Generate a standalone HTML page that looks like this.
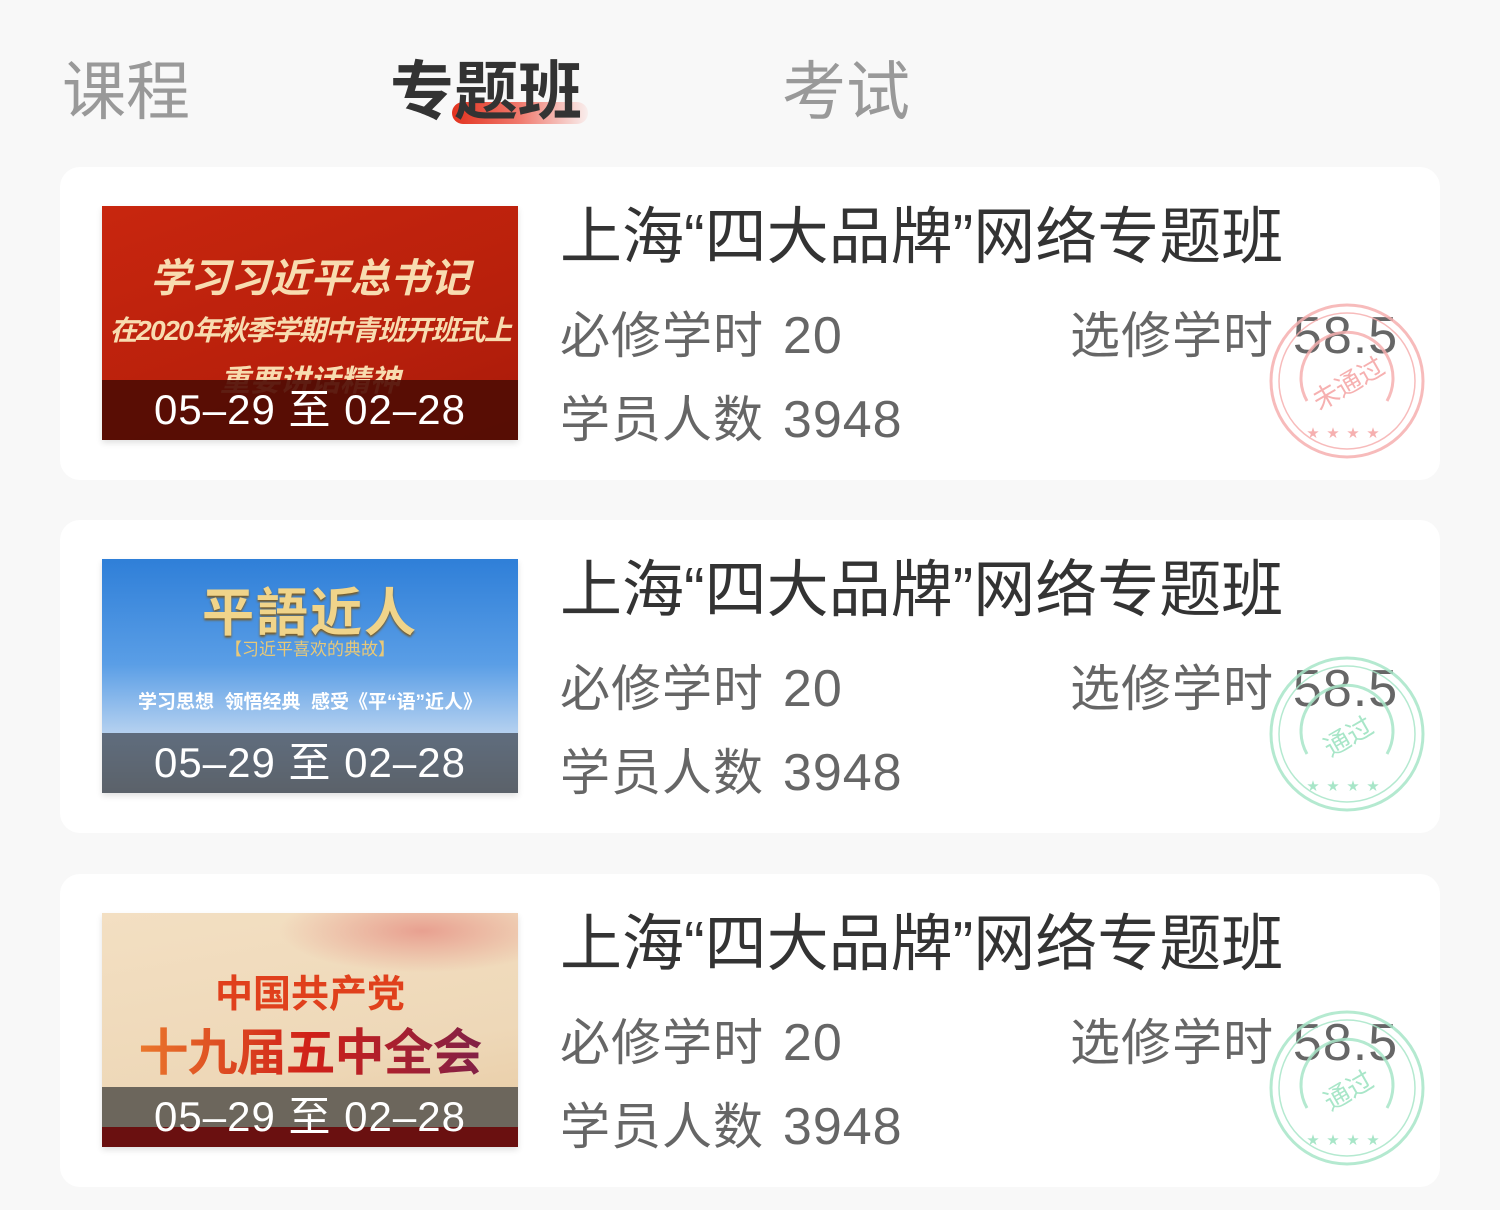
<!DOCTYPE html>
<html><head><meta charset="utf-8"><style>
body{margin:0;width:1500px;height:1210px;background:#f8f8f8;font-family:"Liberation Sans","Noto Sans CJK SC",sans-serif;position:relative;overflow:hidden}
.tab{position:absolute;top:54px;font-size:64px;line-height:76px;color:#999}
.card{position:absolute;left:60px;width:1380px;height:313px;background:#fff;border-radius:20px}
.img{position:absolute;left:42px;top:39px;width:416px;height:234px;overflow:hidden;box-shadow:0 3px 6px rgba(0,0,0,.12)}
.date{position:absolute;left:0;right:0;bottom:0;height:60px;color:#fff;font-size:42px;line-height:60px;text-align:center;letter-spacing:1px}
.t{position:absolute;left:500px;top:40px;font-size:62px;line-height:62px;color:#333;white-space:nowrap;letter-spacing:0}
.s{position:absolute;font-size:50px;line-height:50px;color:#666;white-space:nowrap;letter-spacing:1px;word-spacing:4px}
.s b{font-weight:normal;font-size:52px}
.stamp{position:absolute;left:1207px;top:134px}
</style></head><body>
<div class="tab" style="left:62px">课程</div>
<div style="position:absolute;left:452px;top:102px;width:136px;height:22px;border-radius:11px;background:linear-gradient(90deg,#e2321e,#f07a6e 50%,rgba(250,200,195,0.2))"></div>
<div class="tab" style="left:390px;color:#333;font-weight:bold">专题班</div>
<div class="tab" style="left:782px">考试</div>

<div class="card" style="top:167px">
 <div class="img" style="background:linear-gradient(160deg,#c8260e,#b8200c 60%,#a81a0a)">
  <div style="position:absolute;top:40px;width:100%;text-align:center;color:#f8dcb0;font-size:40px;font-weight:bold;font-style:italic">学习习近平总书记</div>
  <div style="position:absolute;top:103px;width:100%;text-align:center;color:#f8dcb0;font-size:28px;font-weight:bold;font-style:italic;letter-spacing:-1.5px">在2020年秋季学期中青班开班式上</div>
  <div style="position:absolute;top:150px;width:100%;text-align:center;color:#f8dcb0;font-size:30px;font-weight:bold;font-style:italic">重要讲话精神</div>
  <div class="date" style="background:rgba(80,12,4,0.92)">05–29 至 02–28</div>
 </div>
 <div class="t">上海“四大品牌”网络专题班</div>
 <div class="s" style="left:500px;top:144px">必修学时 <b>20</b></div>
 <div class="s" style="left:1010px;top:144px">选修学时 <b>58.5</b></div>
 <div class="s" style="left:500px;top:228px">学员人数 <b>3948</b></div>
 <svg class="stamp" width="160" height="160" viewBox="0 0 160 160"><g fill="none" stroke="#f6b0b0" stroke-width="3" opacity=".85"><circle cx="80" cy="80" r="76"/><circle cx="80" cy="80" r="68" stroke-width="1.5"/><path d="M40 100 A46 46 0 1 1 120 100"/></g><text x="80" y="92" font-size="26" fill="#f6b0b0" text-anchor="middle" transform="rotate(-30 80 80)">未通过</text><text x="80" y="136" font-size="12" fill="#f6b0b0" text-anchor="middle" letter-spacing="8">★★★★</text></svg>
</div>

<div class="card" style="top:520px">
 <div class="img" style="background:linear-gradient(180deg,#2f7fd8,#5a9ee6 45%,#b7d2f0 75%,#9b8b70)">
  <div style="position:absolute;top:12px;width:100%;text-align:center;color:#f0d48a;font-size:52px;font-weight:bold;letter-spacing:2px;text-shadow:0 2px 2px #7a5a20">平語近人</div>
  <div style="position:absolute;top:76px;width:100%;text-align:center;color:#e8c878;font-size:17px">【习近平喜欢的典故】</div>
  <div style="position:absolute;top:128px;width:100%;text-align:center;color:#fff;font-size:19px;font-weight:bold;white-space:nowrap">学习思想 &nbsp;领悟经典 &nbsp;感受《平“语”近人》</div>
  <div class="date" style="background:rgba(80,90,105,0.85)">05–29 至 02–28</div>
 </div>
 <div class="t">上海“四大品牌”网络专题班</div>
 <div class="s" style="left:500px;top:144px">必修学时 <b>20</b></div>
 <div class="s" style="left:1010px;top:144px">选修学时 <b>58.5</b></div>
 <div class="s" style="left:500px;top:228px">学员人数 <b>3948</b></div>
 <svg class="stamp" width="160" height="160" viewBox="0 0 160 160"><g fill="none" stroke="#a8e6c8" stroke-width="3" opacity=".85"><circle cx="80" cy="80" r="76"/><circle cx="80" cy="80" r="68" stroke-width="1.5"/><path d="M40 100 A46 46 0 1 1 120 100"/></g><text x="80" y="92" font-size="26" fill="#a8e6c8" text-anchor="middle" transform="rotate(-30 80 80)">通过</text><text x="80" y="136" font-size="12" fill="#a8e6c8" text-anchor="middle" letter-spacing="8">★★★★</text></svg>
</div>

<div class="card" style="top:874px">
 <div class="img" style="background:linear-gradient(170deg,#f3dfc2,#eed8b8 60%,#e7c9a0)">
  <div style="position:absolute;right:0;top:0;width:240px;height:60px;background:radial-gradient(ellipse at 60% 30%,#e8a090,rgba(240,200,180,0) 70%)"></div>
  <div style="position:absolute;top:50px;width:100%;text-align:center;color:#e0401c;font-size:38px;font-weight:bold">中国共产党</div>
  <div style="position:absolute;top:112px;width:100%;text-align:center;font-size:50px;line-height:56px;font-weight:bold;letter-spacing:-1px;background:linear-gradient(90deg,#f08a30,#d02018 50%,#702050);-webkit-background-clip:text;background-clip:text;-webkit-text-fill-color:transparent">十九届五中全会</div>
  <div class="date" style="background:linear-gradient(180deg,#6c665c 0,#6c665c 40px,#6a1010 40px)">05–29 至 02–28</div>
 </div>
 <div class="t">上海“四大品牌”网络专题班</div>
 <div class="s" style="left:500px;top:144px">必修学时 <b>20</b></div>
 <div class="s" style="left:1010px;top:144px">选修学时 <b>58.5</b></div>
 <div class="s" style="left:500px;top:228px">学员人数 <b>3948</b></div>
 <svg class="stamp" width="160" height="160" viewBox="0 0 160 160"><g fill="none" stroke="#a8e6c8" stroke-width="3" opacity=".85"><circle cx="80" cy="80" r="76"/><circle cx="80" cy="80" r="68" stroke-width="1.5"/><path d="M40 100 A46 46 0 1 1 120 100"/></g><text x="80" y="92" font-size="26" fill="#a8e6c8" text-anchor="middle" transform="rotate(-30 80 80)">通过</text><text x="80" y="136" font-size="12" fill="#a8e6c8" text-anchor="middle" letter-spacing="8">★★★★</text></svg>
</div>
</body></html>
